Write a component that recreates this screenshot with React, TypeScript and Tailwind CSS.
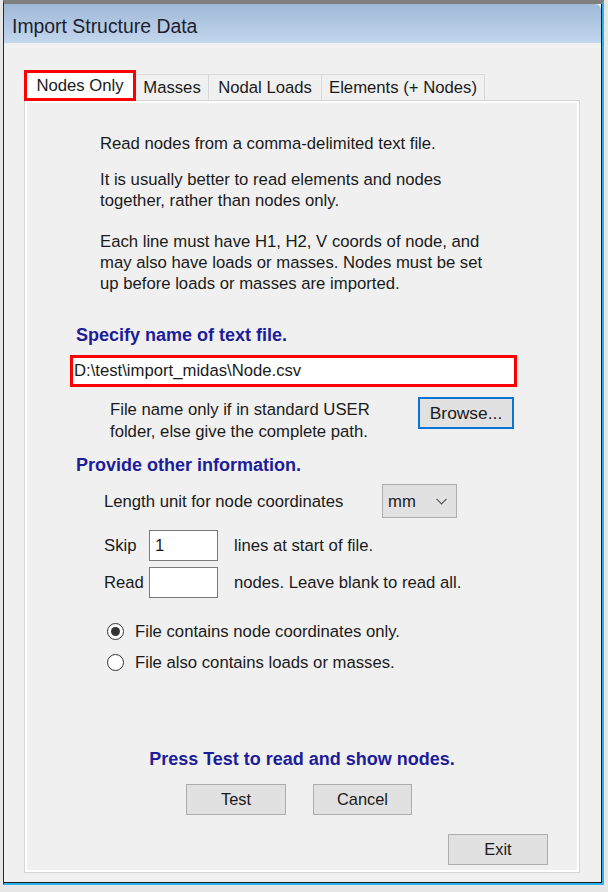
const body = "text-[16.7px] leading-[21px]";
const btn =
  "h-[31px] border border-[#adadad] bg-[#e1e1e1] text-[16.4px] text-[#1a1a1a] flex items-center justify-center";

function Radio({ checked, label, className }: { checked?: boolean; label: string; className: string }) {
  return (
    <div className={`ml-[82px] flex h-[24px] items-center gap-[11px] ${className}`}>
      <span className="flex h-[17px] w-[17px] items-center justify-center rounded-full border border-[#333333] bg-white">
        {checked ? <span className="h-[9px] w-[9px] rounded-full bg-[#333333]" /> : null}
      </span>
      <span className={body}>{label}</span>
    </div>
  );
}

function Tabs() {
  return (
    <div className="flex h-[30px] items-end text-[16.7px]">
      <div className="relative z-10 -mb-[1px] flex h-[31px] w-[112px] items-center justify-center border-[3px] border-[#ff0000] bg-white">
        Nodes Only
      </div>
      <div className="flex h-[26px] w-[73px] items-center justify-center border-t border-r border-[#d9d9d9]">Masses</div>
      <div className="flex h-[26px] w-[113px] items-center justify-center border-t border-r border-[#d9d9d9]">
        Nodal Loads
      </div>
      <div className="flex h-[26px] w-[163px] items-center justify-center border-t border-r border-[#d9d9d9]">
        Elements (+ Nodes)
      </div>
    </div>
  );
}

export default function App() {
  return (
    <div className="h-[892px] w-[608px] overflow-hidden bg-[#e6e6e6] font-['Liberation_Sans',Arial,sans-serif] text-[#1a1a1a]">
      <div className="ml-[3px] h-[885px] w-[601px] border-t-4 border-r-2 border-b-2 border-l border-t-[#7f7f7f] border-r-[#2cb2e8] border-b-[#2cb2e8] border-l-[#2b2b2b]">
        <div className="flex h-full flex-col border-r border-b border-[#1c1c1c] bg-[#f0f0f0]">
          <div className="flex h-[39px] shrink-0 items-center rounded-tr-[6px] bg-linear-to-b from-[#9fb8d6] to-[#c3d7ed] pt-[6px] pl-[8px] text-[19.4px] text-[#1e1e30]">
            Import Structure Data
          </div>

          <div className="pt-[27px] pl-[20px]">
            <Tabs />

            {/* panel */}
            <div className="flex h-[773px] w-[556px] flex-col border border-[#d5d5d5] shadow-[inset_0_0_0_2px_#ffffff]">
              <p className={`mt-[32px] ml-[75px] ${body}`}>Read nodes from a comma-delimited text file.</p>
              <p className={`mt-[15px] ml-[75px] ${body}`}>
                It is usually better to read elements and nodes
                <br />
                together, rather than nodes only.
              </p>
              <p className={`mt-[20px] ml-[75px] ${body}`}>
                Each line must have H1, H2, V coords of node, and
                <br />
                may also have loads or masses. Nodes must be set
                <br />
                up before loads or masses are imported.
              </p>

              <h2 className="mt-[30px] ml-[51px] text-[18px] leading-[22px] font-bold text-[#1d1d9a]">
                Specify name of text file.
              </h2>
              <div className="mt-[9px] ml-[45px] flex h-[32px] w-[447px] items-center border-[3px] border-[#ff0000] bg-white pl-[1px] text-[16.7px]">
                {"D:\\test\\import_midas\\Node.csv"}
              </div>

              <div className="mt-[10px] ml-[85px] flex items-start">
                <p className="mt-[2px] w-[308px] text-[16.7px] leading-[22px]">
                  File name only if in standard USER
                  <br />
                  folder, else give the complete path.
                </p>
                <div className="flex h-[32px] w-[96px] items-center justify-center border-2 border-[#0a74d6] bg-[#e1e1e1] text-[17.4px]">
                  Browse...
                </div>
              </div>

              <h2 className="mt-[11px] ml-[51px] text-[18px] leading-[22px] font-bold text-[#1d1d9a]">
                Provide other information.
              </h2>

              <div className="mt-[8px] ml-[79px] flex h-[34px] items-center">
                <span className={`w-[278px] ${body}`}>Length unit for node coordinates</span>
                <div className="flex h-[34px] w-[75px] items-center justify-between border border-[#adadad] bg-[#e1e1e1] pr-[9px] pl-[5px]">
                  <span className={body}>mm</span>
                  <svg width="11" height="7" viewBox="0 0 11 7" fill="none">
                    <path d="M0.5 0.8 L5.5 5.8 L10.5 0.8" stroke="#555555" strokeWidth="1.2" />
                  </svg>
                </div>
              </div>

              <div className="mt-[12px] ml-[79px] flex h-[31px] items-center">
                <span className={`w-[45px] ${body}`}>Skip</span>
                <div className={`flex h-[31px] w-[69px] items-center border border-[#7a7a7a] bg-white pl-[5px] ${body}`}>1</div>
                <span className={`ml-[16px] ${body}`}>lines at start of file.</span>
              </div>

              <div className="mt-[6px] ml-[79px] flex h-[31px] items-center">
                <span className={`w-[45px] ${body}`}>Read</span>
                <div className="h-[31px] w-[69px] border border-[#7a7a7a] bg-white" />
                <span className={`ml-[16px] ${body}`}>nodes. Leave blank to read all.</span>
              </div>

              <Radio checked label="File contains node coordinates only." className="mt-[21px]" />
              <Radio label="File also contains loads or masses." className="mt-[7px]" />

              <p className="mt-[74px] text-center text-[18px] leading-[22px] font-bold text-[#1d1d9a]">
                Press Test to read and show nodes.
              </p>

              <div className="mt-[14px] ml-[161px] flex gap-[27px]">
                <div className={`w-[100px] ${btn}`}>Test</div>
                <div className={`w-[99px] ${btn}`}>Cancel</div>
              </div>

              <div className={`mt-[19px] ml-[423px] w-[100px] ${btn}`}>Exit</div>
            </div>
          </div>
        </div>
      </div>
    </div>
  );
}
